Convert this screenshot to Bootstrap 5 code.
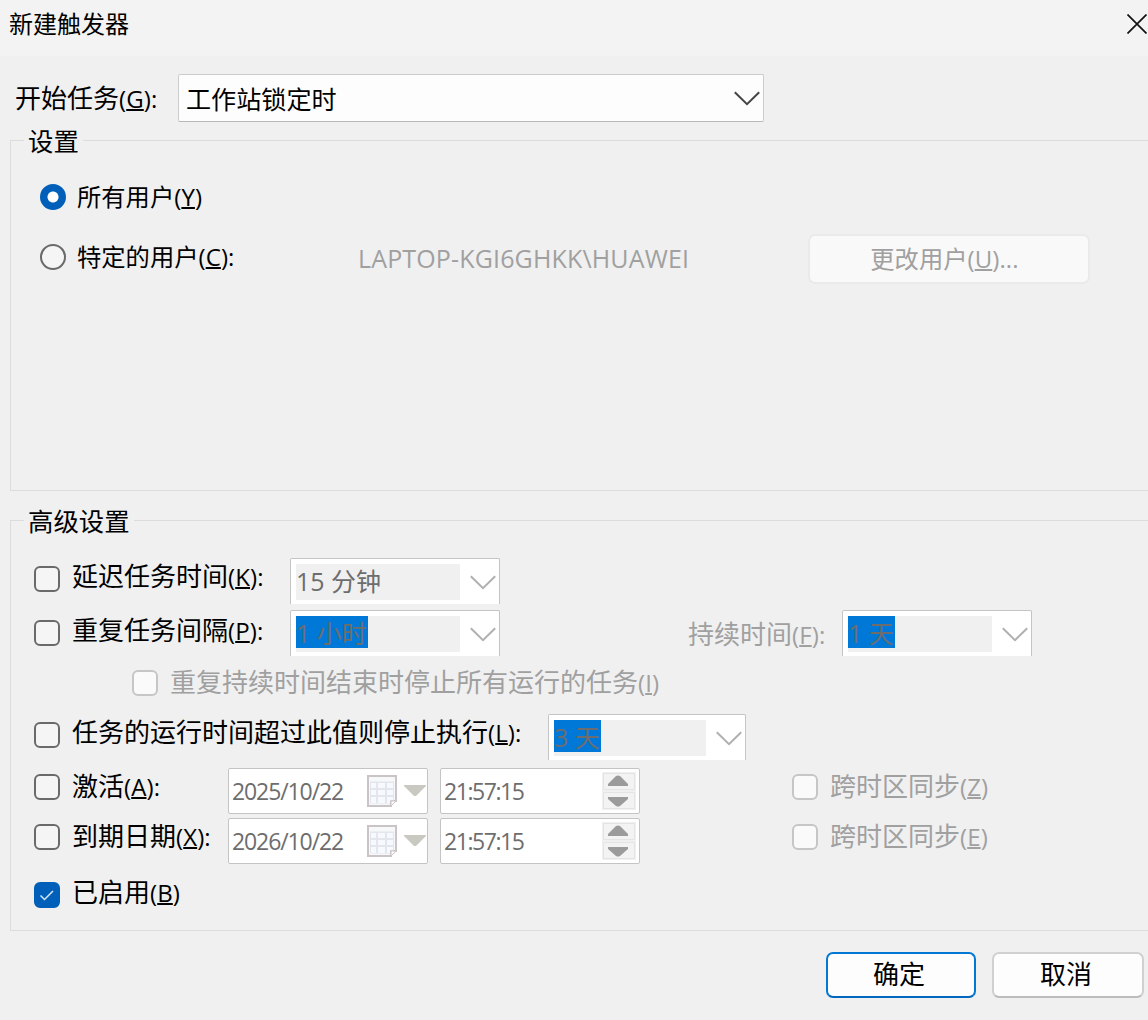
<!DOCTYPE html>
<html lang="zh-CN">
<head>
  <meta charset="UTF-8" />
  <meta name="viewport" content="width=device-width, initial-scale=1.0"/>
  <title>新建触发器</title>
  <link href="https://cdn.jsdelivr.net/npm/bootstrap@5.3.2/dist/css/bootstrap.min.css" rel="stylesheet"/>
  <style>
    body {
      font-family: "Open Sans", "Noto Sans CJK SC", sans-serif;
      font-size: 26px;
      line-height: 26px;
      color: #000;
      background-color: #f0f0f0;
      height: 1020px;
      overflow: hidden;
      white-space: nowrap;
    }
    svg { display: block; flex: none; }
    .titlebar {
      height: 56px;
      padding: 14px 1px 0 9px;
      font-size: 24px;
      line-height: 22px;
      background-color: #f3f3f3;
    }
    .titlebar span { margin-top: -1px; }
    /* access key part of a label */
    .key { font-size: 24px; letter-spacing: .1px; }
    .key u { text-decoration-thickness: 2px; text-underline-offset: 1px; text-decoration-skip-ink: none; }
    .begin { padding: 18px 0 0 15px; }
    .begin label { width: 163px; }
    .begin-select {
      width: 586px;
      height: 48px;
      padding: 1px 3px 0 7px;
      font-size: 25.1px;
      background-color: #fdfdfd;
      border: 1px solid #ccc;
      border-bottom-color: #b8b8b8;
      border-radius: 2px;
    }

    .group {
      margin: 3px 0 0 10px;
      padding: 0 0 0 23px;
      height: 366px;
      border: 1px solid #dcdcdc;
      border-right: 0;
    }
    .group legend {
      float: none;
      width: auto;
      height: 30px;
      margin: 0 0 0 -10px;
      padding: 3px 4px 0;
      font-size: 25.4px;
      line-height: 26px;
    }
    .group-advanced { height: 426px; margin-top: 14px; }

    .users { padding: 12px 0 0 6px; font-size: 24.3px; }
    .users .line { height: 60px; }
    .users label { width: 281px; margin-left: -1px; }
    .account { width: 450px; font-size: 25px; letter-spacing: .15px; padding-top: 2px; }
    .off { color: #a0a0a0; }

    .form-check-input {
      flex: none;
      width: 26px;
      height: 26px;
      margin: 0 12px 0 0;
      border: 2px solid #6a6a6a;
      background-color: #f5f5f5;
    }
    .form-check-input[type=checkbox] { border-radius: 6px; }
    .form-check-input:checked {
      background-color: #005fb8;
      border-color: #005fb8;
    }
    .form-check-input:checked[type=radio] {
      background-image: radial-gradient(circle, #fff 5px, #005fb8 6px);
    }
    .form-check-input:checked[type=checkbox] {
      background-image: url("data:image/svg+xml,%3csvg xmlns='http://www.w3.org/2000/svg' viewBox='0 0 22 22'%3e%3cpath fill='none' stroke='%23d5e6f5' stroke-width='1.5' d='M4.500 11.500l4 4L17 7'/%3e%3c/svg%3e");
    }
    .form-check-input:disabled { opacity: 1; border-color: #c6c6c6; background-color: #fafafa; }

    .btn-win {
      height: 46px;
      padding: 0 4px 3px 0;
      font-size: 26px;
      line-height: 26px;
      color: #000;
      background-color: #fdfdfd;
      border: 2px solid #d0d0d0;
      border-bottom-color: #bcbcbc;
      border-radius: 7px;
    }
    .btn-ok { width: 150px; border-color: #0078d4; border-bottom-color: #0067c0; }
    .btn-cancel { width: 152px; }
    .btn-change, .btn-change:disabled {
      width: 282px;
      height: 50px;
      margin-top: 4px;
      padding: 0 9px 1px 0;
      font-size: 24.3px;
      color: #a0a0a0;
      background-color: #f9f9f9;
      border-color: #eaeaea;
      opacity: 1;
    }

    .advanced { padding-top: 23px; }
    .advanced .line { height: 52px; }
    .advanced .line-limit { height: 54px; }
    .advanced .line-date { height: 50px; }
    .drop-6 { margin-top: 6px; }
    .drop-8 { margin-top: 8px; }
    .drop-10 { margin-top: 10px; }
    .drop-14 { margin-top: 14px; }
    .advanced label { margin-top: -1px; }
    .advanced .lift { margin-top: -3px; }
    .indent { margin-left: 98px; }
    .name-short { width: 218px; }
    .name-long { width: 476px; }
    .name-date { width: 156px; }
    .advanced .duration { width: 154px; margin: 11px 0 0 188px; }
    .sync { margin-left: 152px; }

    .combo {
      width: 210px;
      height: 46px;
      padding: 5px 3px 0 5px;
      background-color: #fff;
      border: 1px solid #c4c4c4;
      border-bottom: 0;
      border-radius: 2px 2px 0 0;
    }
    .combo-duration { width: 190px; }
    .combo-limit { width: 198px; }
    .combo-text {
      height: 36px;
      margin-right: 10px;
      font-size: 25px;
      line-height: 34px;
      color: #6d6d6d;
      background-color: #f0f0f0;
    }
    .combo-text span { display: block; width: max-content; }
    .combo-text .picked { height: 32px; padding-right: 1px; background-color: #0078d7; }
    .combo svg { margin-top: 11px; }

    .stamp {
      width: 200px;
      height: 46px;
      margin-right: 12px;
      padding: 0 1px 0 3px;
      font-size: 23px;
      letter-spacing: -1.1px;
      color: #6d6d6d;
      background-color: #fff;
      border: 1px solid #c4c4c4;
      border-radius: 2px;
    }
    .stamp-icons { gap: 7px; }
    .stamp-time { margin-right: 0; padding: 0 3px; letter-spacing: -1.45px; }
    .footer-bar { padding: 21px 4px 0 0; gap: 16px; }
  </style>
</head>
<body>
  <!-- Shared shapes -->
  <svg width="0" height="0" class="position-absolute">
    <defs>
      <symbol id="chevron" viewBox="0 0 26 15">
        <path d="M.8 1.2L13 13.2 25.2 1.2" fill="none" stroke="currentColor" stroke-width="2"/>
      </symbol>
      <symbol id="calendar" viewBox="0 0 30 33">
        <path d="M1 1h28v25h-5v5H1z" fill="#f7f8fa" stroke="#cbc4c6" stroke-width="2"/>
        <path d="M3 6.500h24v19h-4v3H3z" fill="#e3e6ec"/>
        <path d="M4 8h5v5H4zM11 8h7v5h-7zM20 8h6v5h-6zM4 15h5v5H4zM11 15h7v5h-7zM20 15h6v5h-6zM4 22h5v6H4zM11 22h7v6h-7zM20 22h6v3h-3v3h-3z" fill="#f6f9fe"/>
        <path d="M24 31v-5h5z" fill="#fff" stroke="#cbc4c6"/>
      </symbol>
      <symbol id="spin" viewBox="0 0 34 38">
        <path d="M0 0h34v38H0z" fill="#f0f0f0"/>
        <path d="M1.500 1.500h31v16h-31zM1.500 20.500h31v16h-31z" fill="#f3f3f3" stroke="#e4e4e4"/>
        <path d="M6 14v-2l8-8q2-1 4 0l8 8v2zM6 25v2l8 7q2 1 4 0l8-7v-2z" fill="#9b9b9b"/>
      </symbol>
      <symbol id="arrow" viewBox="0 0 22 12">
        <path d="M0 0h22v1L12 11h-2L0 1z" fill="#c9c9c1"/>
      </symbol>
    </defs>
  </svg>

  <!-- Title bar -->
  <div class="titlebar d-flex justify-content-between">
    <span>新建触发器</span>
    <svg width="20" height="20" viewBox="0 0 20 20"><path d="M.5.5l19 19M19.500.5l-19 19" stroke="#111" stroke-width="1.700"/></svg>
  </div>

  <!-- Begin the task -->
  <div class="begin d-flex align-items-center">
    <label>开始任务<span class="key">(<u>G</u>):</span></label>
    <div class="begin-select d-flex align-items-center justify-content-between">
      <span>工作站锁定时</span>
      <svg width="26" height="15" color="#444"><use href="#chevron"/></svg>
    </div>
  </div>

  <!-- Settings -->
  <fieldset class="group">
    <legend>设置</legend>
    <div class="users">
      <div class="line d-flex align-items-center">
        <input class="form-check-input" type="radio" name="who" id="allUsers" checked>
        <label for="allUsers">所有用户<span class="key">(<u>Y</u>)</span></label>
      </div>
      <div class="line d-flex align-items-center">
        <input class="form-check-input" type="radio" name="who" id="oneUser">
        <label for="oneUser">特定的用户<span class="key">(<u>C</u>):</span></label>
        <span class="account off">LAPTOP-KGI6GHKK\HUAWEI</span>
        <button class="btn btn-win btn-change" type="button" disabled>更改用户<span class="key">(<u>U</u>)...</span></button>
      </div>
    </div>
  </fieldset>

  <!-- Advanced settings -->
  <fieldset class="group group-advanced">
    <legend>高级设置</legend>
    <div class="advanced">
      <div class="line d-flex align-items-start">
        <div class="d-flex drop-8">
          <input class="form-check-input" type="checkbox" id="delay">
          <label class="name-short lift" for="delay">延迟任务时间<span class="key">(<u>K</u>):</span></label>
        </div>
        <div class="combo d-flex align-items-start">
          <div class="combo-text flex-grow-1"><span>15 分钟</span></div>
          <svg width="26" height="15" color="#b0b0b0"><use href="#chevron"/></svg>
        </div>
      </div>
      <div class="line d-flex align-items-start">
        <div class="d-flex drop-10">
          <input class="form-check-input" type="checkbox" id="repeat">
          <label class="name-short lift" for="repeat">重复任务间隔<span class="key">(<u>P</u>):</span></label>
        </div>
        <div class="combo d-flex align-items-start">
          <div class="combo-text flex-grow-1"><span class="picked">1 小时</span></div>
          <svg width="26" height="15" color="#b0b0b0"><use href="#chevron"/></svg>
        </div>
        <label class="duration off">持续时间<span class="key">(<u>F</u>):</span></label>
        <div class="combo combo-duration d-flex align-items-start">
          <div class="combo-text flex-grow-1"><span class="picked">1 天</span></div>
          <svg width="26" height="15" color="#b0b0b0"><use href="#chevron"/></svg>
        </div>
      </div>
      <div class="line d-flex align-items-start">
        <div class="d-flex drop-8 indent">
          <input class="form-check-input" type="checkbox" id="stopAll" disabled>
          <label class="off" for="stopAll">重复持续时间结束时停止所有运行的任务<span class="key">(<u>I</u>)</span></label>
        </div>
      </div>
      <div class="line line-limit d-flex align-items-start">
        <div class="d-flex drop-8">
          <input class="form-check-input" type="checkbox" id="limit">
          <label class="name-long lift" for="limit">任务的运行时间超过此值则停止执行<span class="key">(<u>L</u>):</span></label>
        </div>
        <div class="combo combo-limit d-flex align-items-start">
          <div class="combo-text flex-grow-1"><span class="picked">3 天</span></div>
          <svg width="26" height="15" color="#b0b0b0"><use href="#chevron"/></svg>
        </div>
      </div>
      <div class="line line-date d-flex align-items-start">
        <div class="d-flex drop-6">
          <input class="form-check-input" type="checkbox" id="activate">
          <label class="name-date" for="activate">激活<span class="key">(<u>A</u>):</span></label>
        </div>
        <div class="stamp d-flex align-items-center justify-content-between">
          <span>2025/10/22</span>
          <div class="stamp-icons d-flex align-items-center">
            <svg width="30" height="33"><use href="#calendar"/></svg>
            <svg width="22" height="12"><use href="#arrow"/></svg>
          </div>
        </div>
        <div class="stamp stamp-time d-flex align-items-center justify-content-between">
          <span>21:57:15</span>
          <svg width="34" height="38"><use href="#spin"/></svg>
        </div>
        <div class="d-flex drop-6 sync">
          <input class="form-check-input" type="checkbox" id="syncStart" disabled>
          <label class="off" for="syncStart">跨时区同步<span class="key">(<u>Z</u>)</span></label>
        </div>
      </div>
      <div class="line line-date d-flex align-items-start">
        <div class="d-flex drop-6">
          <input class="form-check-input" type="checkbox" id="expire">
          <label class="name-date" for="expire">到期日期<span class="key">(<u>X</u>):</span></label>
        </div>
        <div class="stamp d-flex align-items-center justify-content-between">
          <span>2026/10/22</span>
          <div class="stamp-icons d-flex align-items-center">
            <svg width="30" height="33"><use href="#calendar"/></svg>
            <svg width="22" height="12"><use href="#arrow"/></svg>
          </div>
        </div>
        <div class="stamp stamp-time d-flex align-items-center justify-content-between">
          <span>21:57:15</span>
          <svg width="34" height="38"><use href="#spin"/></svg>
        </div>
        <div class="d-flex drop-6 sync">
          <input class="form-check-input" type="checkbox" id="syncEnd" disabled>
          <label class="off" for="syncEnd">跨时区同步<span class="key">(<u>E</u>)</span></label>
        </div>
      </div>
      <div class="d-flex drop-14">
        <input class="form-check-input" type="checkbox" id="enabled" checked>
        <label class="lift" for="enabled">已启用<span class="key">(<u>B</u>)</span></label>
      </div>
    </div>
  </fieldset>

  <!-- Dialog buttons -->
  <div class="footer-bar d-flex justify-content-end">
    <button class="btn btn-win btn-ok" type="button">确定</button>
    <button class="btn btn-win btn-cancel" type="button">取消</button>
  </div>

  <script src="https://cdn.jsdelivr.net/npm/bootstrap@5.3.2/dist/js/bootstrap.bundle.min.js"></script>
</body>
</html>
